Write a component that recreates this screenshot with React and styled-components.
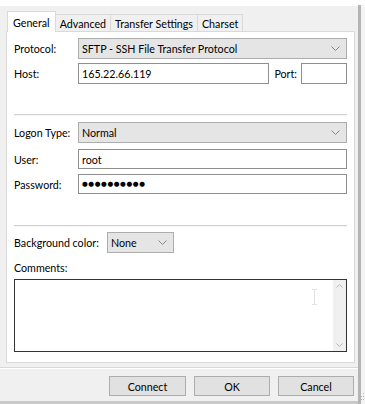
import styled, { createGlobalStyle } from "styled-components";

const GlobalStyle = createGlobalStyle`
  html, body {
    margin: 0;
    padding: 0;
    background: #f0f0f0;
  }
  body {
    font-family: Lato, "Noto Sans", sans-serif;
    font-size: 10.7px;
    color: #000;
  }
`;

const Window = styled.div`
  width: 365px;
  height: 404px;
  display: flex;
  background: #ffffff;
  overflow: hidden;
`;

const Main = styled.div`
  width: 358px;
  display: flex;
  flex-direction: column;
`;

const TopStrip = styled.div`
  height: 6px;
  background: #ffffff;
`;

const Body = styled.div`
  flex: 1;
  background: #f0f0f0;
  display: flex;
  flex-direction: column;
`;

const EdgeBar = styled.div`
  width: 3px;
  margin-top: 5px;
  background: #b4b4b4;
`;

const EdgeRest = styled.div`
  flex: 1;
  margin-top: 5px;
  background: #f4f4f4;
  position: relative;
`;

const TabRow = styled.div`
  display: flex;
  align-items: flex-end;
  height: 25px;
  padding-left: 7px;
`;

const Tab = styled.div`
  height: ${(p) => (p.$active ? "21px" : "17px")};
  padding: 0 ${(p) => (p.$active ? "5px" : "4px")};
  display: flex;
  align-items: center;
  background: ${(p) => (p.$active ? "#ffffff" : "#f0f0f0")};
  border: 1px solid #d9d9d9;
  border-bottom: none;
  margin-left: ${(p) => (p.$active ? "0" : "-1px")};
  position: relative;
  z-index: ${(p) => (p.$active ? 2 : 1)};
  margin-bottom: ${(p) => (p.$active ? "-1px" : "0")};
  box-sizing: border-box;
  white-space: nowrap;
`;

const Panel = styled.div`
  margin-left: 6px;
  width: 349px;
  height: 332px;
  box-sizing: border-box;
  background: #ffffff;
  border: 1px solid #d9d9d9;
  padding: 6px 7px 0 7px;
  display: flex;
  flex-direction: column;
`;

const Row = styled.div`
  display: flex;
  align-items: center;
  height: ${(p) => p.$h || "21px"};
  margin-top: ${(p) => p.$mt || "0"};
`;

const Label = styled.div`
  width: ${(p) => p.$w || "64px"};
  flex-shrink: 0;
  white-space: nowrap;
`;

const Select = styled.div`
  width: ${(p) => p.$w || "269px"};
  height: ${(p) => p.$h || "21px"};
  box-sizing: border-box;
  background: #e5e5e5;
  border: 1px solid #adadad;
  display: flex;
  align-items: center;
  justify-content: space-between;
  padding: 0 6px 0 3px;
`;

const Input = styled.div`
  width: ${(p) => p.$w || "269px"};
  flex: ${(p) => (p.$grow ? "1" : "none")};
  height: ${(p) => p.$h || "21px"};
  box-sizing: border-box;
  background: #ffffff;
  border: 1px solid #8f8f8f;
  display: flex;
  align-items: center;
  padding: 0 3px;
`;

const PortLabel = styled.div`
  margin: 0 4px 0 5px;
`;

const Dots = styled.span`
  font-family: "DejaVu Sans", sans-serif;
  font-size: 6.6px;
  letter-spacing: 0.6px;
`;

const Separator = styled.div`
  height: 1px;
  background: #d0d0d0;
  border-bottom: 1px solid #f6f6f6;
  margin-top: ${(p) => p.$mt};
  width: 333px;
`;

const CommentsLabel = styled.div`
  margin-top: 7px;
  height: 15px;
  display: flex;
  align-items: center;
`;

const TextArea = styled.div`
  margin-top: 4px;
  width: 333px;
  height: 73px;
  box-sizing: border-box;
  border: 1px solid #333333;
  background: #ffffff;
  display: flex;
  justify-content: flex-end;
  position: relative;
`;

const Scrollbar = styled.div`
  width: 13px;
  background: #f0f0f0;
  display: flex;
  flex-direction: column;
  justify-content: space-between;
  align-items: center;
  padding: 4px 0;
`;

const Cursor = styled.svg`
  position: absolute;
  left: 297px;
  top: 9px;
`;

const Divider = styled.div`
  height: 1px;
  background: #d7d7d7;
  border-bottom: 1px solid #ffffff;
  margin-top: 4px;
`;

const ButtonRow = styled.div`
  display: flex;
  justify-content: flex-end;
  gap: 8px;
  padding-right: 4px;
  margin-top: 7px;
`;

const Button = styled.div`
  width: ${(p) => p.$w || "76px"};
  height: 20px;
  box-sizing: border-box;
  background: #e1e1e1;
  border: 1px solid #adadad;
  display: flex;
  align-items: center;
  justify-content: center;
`;

const BottomLine = styled.div`
  margin-top: auto;
  height: 3px;
  background: #c9c9c9;
  border-top: 1px solid #f0f0f0;
`;

const Grip = styled.svg`
  position: absolute;
  right: 0;
  bottom: 3px;
`;

function Chevron() {
  return (
    <svg width="9" height="5" viewBox="0 0 9 5">
      <path d="M0.5 0.5 L4.5 4.5 L8.5 0.5" fill="none" stroke="#888" strokeWidth="1" />
    </svg>
  );
}

function SmallChevron({ up }) {
  return (
    <svg width="7" height="4" viewBox="0 0 7 4">
      <path
        d={up ? "M0.5 3.5 L3.5 0.5 L6.5 3.5" : "M0.5 0.5 L3.5 3.5 L6.5 0.5"}
        fill="none"
        stroke="#b5b5b5"
        strokeWidth="1"
      />
    </svg>
  );
}

export default function App() {
  return (
    <>
      <GlobalStyle />
      <Window>
        <Main>
          <TopStrip />
          <Body>
            <TabRow>
              <Tab $active>General</Tab>
              <Tab>Advanced</Tab>
              <Tab>Transfer Settings</Tab>
              <Tab>Charset</Tab>
            </TabRow>
            <Panel>
              <Row>
                <Label>Protocol:</Label>
                <Select>
                  <span>SFTP - SSH File Transfer Protocol</span>
                  <Chevron />
                </Select>
              </Row>
              <Row $mt="4px">
                <Label>Host:</Label>
                <Input $grow>165.22.66.119</Input>
                <PortLabel>Port:</PortLabel>
                <Input $w="46px" />
              </Row>
              <Separator $mt="30px" />
              <Row $mt="6px" $h="21px">
                <Label>Logon Type:</Label>
                <Select>
                  <span>Normal</span>
                  <Chevron />
                </Select>
              </Row>
              <Row $mt="6px" $h="20px">
                <Label>User:</Label>
                <Input $h="20px">root</Input>
              </Row>
              <Row $mt="5px" $h="20px">
                <Label>Password:</Label>
                <Input $h="20px">
                  <Dots>●●●●●●●●●●</Dots>
                </Input>
              </Row>
              <Separator $mt="31px" />
              <Row $mt="5px">
                <Label $w="93px">Background color:</Label>
                <Select $w="67px">
                  <span>None</span>
                  <Chevron />
                </Select>
              </Row>
              <CommentsLabel>Comments:</CommentsLabel>
              <TextArea>
                <Cursor width="5" height="16" viewBox="0 0 5 16">
                  <path d="M0 0.5 H5 M2.5 0.5 V15.5 M0 15.5 H5" stroke="#e2e2e2" strokeWidth="1" fill="none" />
                </Cursor>
                <Scrollbar>
                  <SmallChevron up />
                  <SmallChevron />
                </Scrollbar>
              </TextArea>
            </Panel>
            <Divider />
            <ButtonRow>
              <Button $w="77px">Connect</Button>
              <Button>OK</Button>
              <Button>Cancel</Button>
            </ButtonRow>
            <BottomLine />
          </Body>
        </Main>
        <EdgeBar />
        <EdgeRest>
          <Grip width="6" height="8" viewBox="0 0 6 8">
            <rect x="4" y="0" width="1" height="1" fill="#b0b0b0" />
            <rect x="2" y="3" width="1" height="1" fill="#b0b0b0" />
            <rect x="4" y="3" width="1" height="1" fill="#b0b0b0" />
            <rect x="0" y="6" width="1" height="1" fill="#b0b0b0" />
            <rect x="2" y="6" width="1" height="1" fill="#b0b0b0" />
            <rect x="4" y="6" width="1" height="1" fill="#b0b0b0" />
          </Grip>
        </EdgeRest>
      </Window>
    </>
  );
}
